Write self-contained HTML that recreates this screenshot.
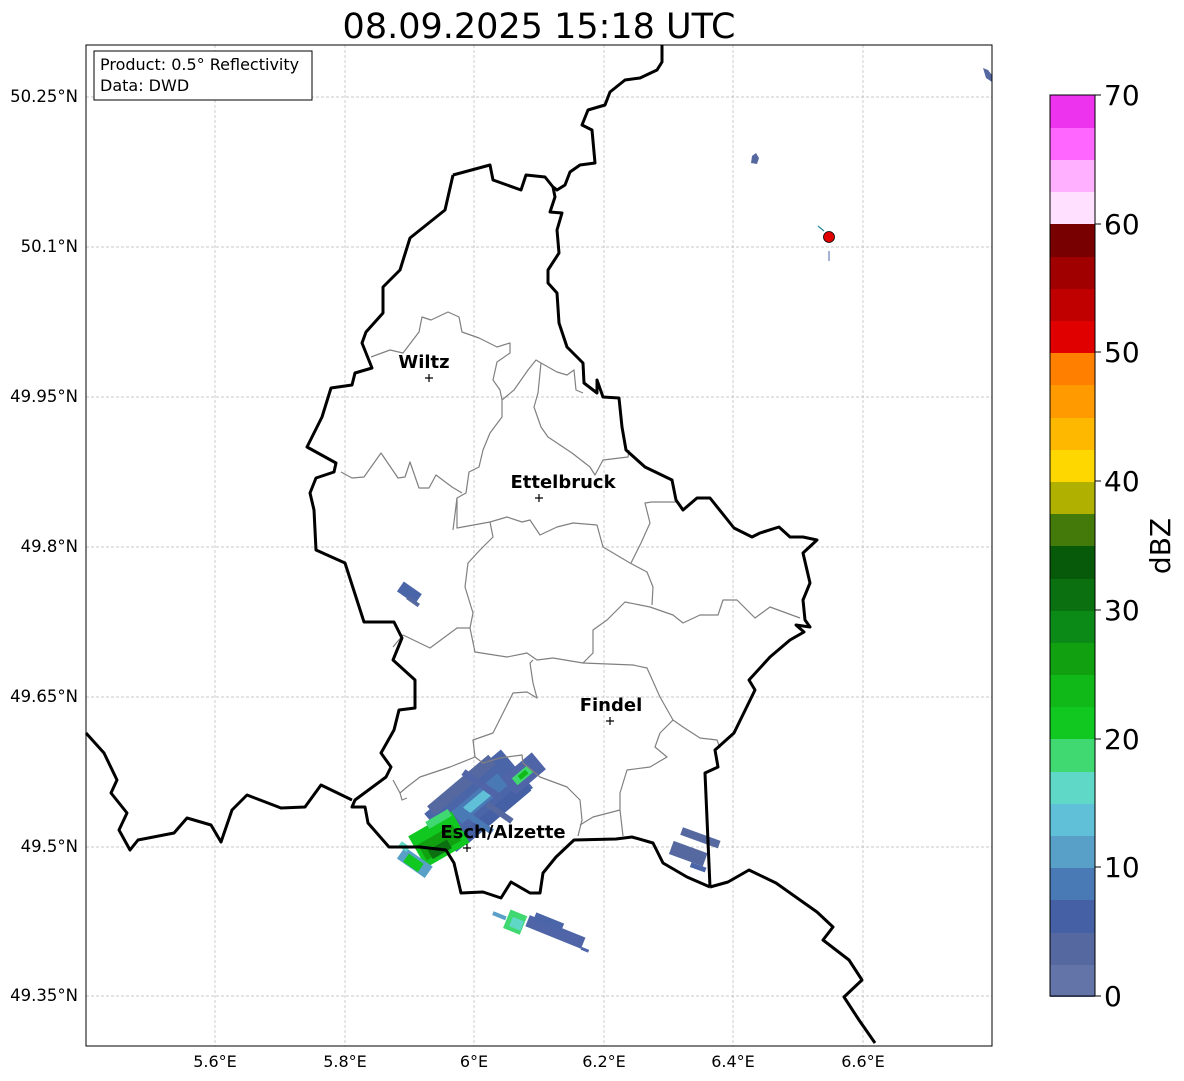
<!DOCTYPE html>
<html><head><meta charset="utf-8"><style>
html,body{margin:0;padding:0;background:#fff;}
svg{display:block;font-family:"DejaVu Sans","Liberation Sans",sans-serif;}
</style></head><body>
<svg width="1184" height="1081" viewBox="0 0 1184 1081" xmlns="http://www.w3.org/2000/svg">
<rect width="1184" height="1081" fill="#fff"/>
<text x="539" y="38" font-size="35" text-anchor="middle" fill="#000">08.09.2025 15:18 UTC</text>

<g stroke="#b8b8b8" stroke-width="0.7" stroke-dasharray="3,2">
<line x1="215" y1="45" x2="215" y2="1046"/><line x1="345" y1="45" x2="345" y2="1046"/>
<line x1="474" y1="45" x2="474" y2="1046"/><line x1="604" y1="45" x2="604" y2="1046"/>
<line x1="733" y1="45" x2="733" y2="1046"/><line x1="863" y1="45" x2="863" y2="1046"/>
<line x1="86" y1="97" x2="992" y2="97"/><line x1="86" y1="247" x2="992" y2="247"/>
<line x1="86" y1="397" x2="992" y2="397"/><line x1="86" y1="547" x2="992" y2="547"/>
<line x1="86" y1="697" x2="992" y2="697"/><line x1="86" y1="847" x2="992" y2="847"/>
<line x1="86" y1="996" x2="992" y2="996"/>
</g>

<g>
<g transform="rotate(35 408 593)"><rect x="398" y="586" width="22" height="12" fill="#4a66a8"/><rect x="410" y="595" width="14" height="4" fill="#5569a0"/></g>
<g transform="rotate(20 695 838)"><rect x="680" y="832" width="40" height="8" fill="#5569a0"/><rect x="676" y="848" width="36" height="14" fill="#5569a0"/><rect x="700" y="862" width="16" height="5" fill="#4a66a8"/></g>
<!-- main Esch cluster -->
<g transform="rotate(-40 478 800)">
<rect x="428" y="776" width="100" height="50" fill="#4a66a8"/>
<rect x="435" y="772" width="80" height="12" fill="#5569a0"/>
<rect x="440" y="815" width="85" height="12" fill="#4560a5"/>
<rect x="450" y="792" width="60" height="16" fill="#4a7ab5"/>
<rect x="462" y="796" width="34" height="9" fill="#60c0d8"/>
</g>
<g transform="rotate(35 478 800)">
<rect x="450" y="782" width="44" height="7" fill="#5064a8"/>
<rect x="468" y="815" width="40" height="6" fill="#4a7ab5"/>
<rect x="488" y="795" width="30" height="6" fill="#5569a0"/>
</g>
<g transform="rotate(-40 522 775)">
<rect x="504" y="764" width="40" height="22" fill="#5064a8"/><rect x="512" y="771" width="20" height="9" fill="#40d870"/><rect x="518" y="773" width="10" height="5" fill="#10b818"/>
</g>
<g transform="rotate(-30 438 840)">
<rect x="414" y="822" width="50" height="36" fill="#10c820"/>
<rect x="418" y="834" width="40" height="18" fill="#10a010"/>
<rect x="424" y="844" width="22" height="10" fill="#0a7010"/>
<rect x="436" y="818" width="26" height="8" fill="#40d870"/>
</g>
<g transform="rotate(35 414 862)">
<rect x="398" y="855" width="34" height="14" fill="#58a0c8"/><rect x="405" y="858" width="18" height="10" fill="#10c820"/><rect x="392" y="852" width="10" height="6" fill="#60d8c8"/>
</g>
<g transform="rotate(22 540 930)">
<rect x="525" y="920" width="60" height="12" fill="#5064a8"/>
<rect x="530" y="915" width="30" height="8" fill="#4a66a8"/>
<rect x="505" y="922" width="18" height="20" fill="#40d870"/>
<rect x="510" y="928" width="12" height="10" fill="#60d8c8"/>
<rect x="490" y="930" width="14" height="4" fill="#58a0c8"/>
<rect x="585" y="930" width="8" height="3" fill="#5064a8"/>
</g>
<path d="M752 156 L756 153 L759 158 L757 164 L751 163 Z" fill="#5569a0"/>
<path d="M983 68 L988 70 L992 75 L992 82 L986 78 Z" fill="#5569a0"/>
<line x1="818" y1="226" x2="824" y2="231" stroke="#2a8a9a" stroke-width="1.2"/>
<line x1="829" y1="251" x2="829" y2="261" stroke="#4a66a8" stroke-width="1"/>
</g>

<g fill="none" stroke="#808080" stroke-width="1.2" stroke-linejoin="round">
<path d="M371 357 L390 350 L403 353 L419 332 L422 317 L431 320 L448 312 L459 317 L462 332 L479 338 L497 347 L510 343 L510 353 L497 362 L493 380 L500 390 L502 400 L502 417 L490 433 L483 450 L479 467 L469 472 L466 493 L457 498 L453 530"/>
<path d="M502 400 L514 390 L528 370 L536 360 L541 363 L557 372 L567 375 L574 370 L576 390 L583 393"/>
<path d="M541 363 L538 393 L534 407 L541 427 L548 437 L572 453 L590 467 L595 475 L603 460 L628 457 L629 450"/>
<path d="M341 472 L352 478 L364 477 L381 453 L398 478 L405 477 L410 462 L419 488 L429 488 L436 475 L452 487 L462 493"/>
<path d="M457 498 L457 528 L490 522 L507 517 L522 522 L530 520 L540 535 L557 527 L573 523 L597 525 L603 547 L630 563 L647 572 L653 587 L652 605"/>
<path d="M631 563 L641 543 L650 523 L645 503 L652 502 L678 502"/>
<path d="M490 522 L493 537 L480 550 L468 563 L465 587 L473 613 L470 628 L457 628 L430 648 L403 635 L393 647"/>
<path d="M470 628 L475 652 L507 657 L527 653 L537 660 L553 658 L583 663 L593 653 L593 630 L607 620 L625 602 L650 607 L673 615 L683 623 L700 615 L718 615 L723 600 L737 600 L755 618 L770 607 L800 618"/>
<path d="M583 663 L633 665 L647 668 L660 697 L673 720 L683 727 L700 738 L717 740 L720 748"/>
<path d="M673 720 L660 733 L655 747 L667 757 L650 767 L627 770 L620 793 L620 810 L623 836"/>
<path d="M620 810 L593 817 L580 825"/>
<path d="M533 660 L530 663 L533 683 L537 698 L527 692 L513 693 L503 713 L493 733 L473 740 L475 757 L483 763 L500 758 L522 755 L523 763 L540 777 L567 787 L580 800 L582 820 L578 836"/>
<path d="M475 757 L450 767 L420 777 L407 787 L400 793 L393 780"/>
<path d="M400 793 L402 800 L407 798"/>
</g>

<g fill="none" stroke="#000" stroke-width="3" stroke-linejoin="round">
<path d="M453 175 L490 165 L493 180 L521 190 L526 175 L545 177 L553 187 L555 197 L550 212 L562 213 L557 230 L559 253 L548 270 L548 283 L557 293 L559 323 L567 347 L583 363 L584 383 L597 393 L597 380 L603 397 L619 398 L622 427 L626 450 L645 467 L672 480 L676 500 L683 510 L697 498 L710 498 L734 528 L752 537 L760 533 L779 527 L790 537 L803 537 L817 540 L803 553 L810 583 L803 600 L805 620 L810 627 L796 625 L804 632 L790 640 L770 657 L749 680 L755 690 L734 733 L715 750 L718 767 L705 773 L710 887"/>
<path d="M710 887 L687 877 L663 863 L653 843 L632 837 L616 839 L574 840 L556 857 L543 873 L540 893 L530 893 L511 882 L501 898 L483 892 L461 893 L454 863 L446 850 L420 847 L389 847 L368 823 L365 807 L352 807 L355 800 L386 777 L391 767 L381 753 L394 730 L399 710 L415 708 L415 680 L393 660 L402 638 L394 622 L364 622 L345 563 L316 550 L314 510 L310 493 L316 478 L334 472 L336 463 L307 447 L322 417 L331 388 L352 385 L355 373 L372 368 L362 343 L366 332 L383 313 L383 287 L400 270 L410 238 L445 210 L453 175"/>
<path d="M86 733 L104 753 L117 780 L111 793 L127 813 L119 830 L130 850 L138 840 L174 833 L187 818 L211 825 L221 842 L232 810 L247 795 L281 808 L305 807 L321 785 L352 800"/>
<path d="M710 887 L728 882 L749 870 L776 883 L800 900 L817 912 L833 927 L823 940 L849 960 L862 980 L844 997 L859 1020 L875 1043"/>
<path d="M553 187 L557 190 L565 185 L570 172 L580 165 L595 163 L592 130 L582 125 L588 110 L605 105 L610 92 L625 80 L640 78 L657 70 L662 62 L662 45"/>
</g>

<rect x="86" y="45" width="906" height="1001" fill="none" stroke="#000" stroke-width="1"/>

<g font-size="18" font-weight="bold" fill="#000" text-anchor="middle">
<text x="424" y="368">Wiltz</text>
<text x="563" y="488">Ettelbruck</text>
<text x="611" y="711">Findel</text>
<text x="503" y="838">Esch/Alzette</text>
</g>
<g stroke="#000" stroke-width="1.2">
<path d="M425 378 h8 M429 374 v8"/><path d="M535 498 h8 M539 494 v8"/><path d="M606 721 h8 M610 717 v8"/><path d="M463 848 h8 M467 844 v8"/>
</g>
<circle cx="829" cy="237" r="5.5" fill="#e00000" stroke="#000" stroke-width="0.8"/>

<rect x="94" y="51" width="218" height="49" fill="#fff" stroke="#000" stroke-width="1"/>
<text x="100" y="70" font-size="16" fill="#000">Product: 0.5° Reflectivity</text>
<text x="100" y="91" font-size="16" fill="#000">Data: DWD</text>

<g font-size="16.5" fill="#000" text-anchor="end">
<text x="78" y="102">50.25°N</text><text x="78" y="252">50.1°N</text>
<text x="78" y="402">49.95°N</text><text x="78" y="552">49.8°N</text>
<text x="78" y="702">49.65°N</text><text x="78" y="852">49.5°N</text>
<text x="78" y="1001">49.35°N</text>
</g>
<g font-size="16" fill="#000" text-anchor="middle">
<text x="215" y="1067">5.6°E</text><text x="345" y="1067">5.8°E</text>
<text x="474" y="1067">6°E</text><text x="604" y="1067">6.2°E</text>
<text x="733" y="1067">6.4°E</text><text x="863" y="1067">6.6°E</text>
</g>

<g>
<rect x="1050" y="964" width="45" height="33" fill="#6374a8"/>
<rect x="1050" y="932" width="45" height="33" fill="#5569a0"/>
<rect x="1050" y="900" width="45" height="33" fill="#4560a5"/>
<rect x="1050" y="867" width="45" height="33" fill="#4a7ab5"/>
<rect x="1050" y="835" width="45" height="33" fill="#58a0c8"/>
<rect x="1050" y="803" width="45" height="33" fill="#60c0d8"/>
<rect x="1050" y="771" width="45" height="33" fill="#60d8c8"/>
<rect x="1050" y="739" width="45" height="33" fill="#40d870"/>
<rect x="1050" y="706" width="45" height="33" fill="#10c820"/>
<rect x="1050" y="674" width="45" height="33" fill="#10b818"/>
<rect x="1050" y="642" width="45" height="33" fill="#10a010"/>
<rect x="1050" y="610" width="45" height="33" fill="#0c8a18"/>
<rect x="1050" y="578" width="45" height="33" fill="#0a7010"/>
<rect x="1050" y="546" width="45" height="33" fill="#065a0a"/>
<rect x="1050" y="513" width="45" height="33" fill="#447a0a"/>
<rect x="1050" y="481" width="45" height="33" fill="#b0b000"/>
<rect x="1050" y="449" width="45" height="33" fill="#ffd700"/>
<rect x="1050" y="417" width="45" height="33" fill="#ffb800"/>
<rect x="1050" y="385" width="45" height="33" fill="#ff9a00"/>
<rect x="1050" y="352" width="45" height="33" fill="#ff7f00"/>
<rect x="1050" y="320" width="45" height="33" fill="#e00000"/>
<rect x="1050" y="288" width="45" height="33" fill="#c00000"/>
<rect x="1050" y="256" width="45" height="33" fill="#a00000"/>
<rect x="1050" y="224" width="45" height="33" fill="#780000"/>
<rect x="1050" y="191" width="45" height="33" fill="#ffe0ff"/>
<rect x="1050" y="159" width="45" height="33" fill="#ffb0ff"/>
<rect x="1050" y="127" width="45" height="33" fill="#ff66ff"/>
<rect x="1050" y="95" width="45" height="33" fill="#ee33ee"/>
<rect x="1050" y="95" width="45" height="901" fill="none" stroke="#000" stroke-width="1"/>
</g>
<g stroke="#000" stroke-width="1">
<line x1="1095" y1="996" x2="1101" y2="996"/><line x1="1095" y1="867" x2="1101" y2="867"/>
<line x1="1095" y1="739" x2="1101" y2="739"/><line x1="1095" y1="610" x2="1101" y2="610"/>
<line x1="1095" y1="481" x2="1101" y2="481"/><line x1="1095" y1="352" x2="1101" y2="352"/>
<line x1="1095" y1="224" x2="1101" y2="224"/><line x1="1095" y1="95" x2="1101" y2="95"/>
</g>
<g font-size="28" fill="#000">
<text x="1104" y="1006">0</text><text x="1104" y="877">10</text>
<text x="1104" y="749">20</text><text x="1104" y="620">30</text>
<text x="1104" y="491">40</text><text x="1104" y="362">50</text>
<text x="1104" y="234">60</text><text x="1104" y="105">70</text>
</g>
<text transform="translate(1170 546) rotate(-90)" font-size="28" fill="#000" text-anchor="middle">dBZ</text>
</svg>
</body></html>
